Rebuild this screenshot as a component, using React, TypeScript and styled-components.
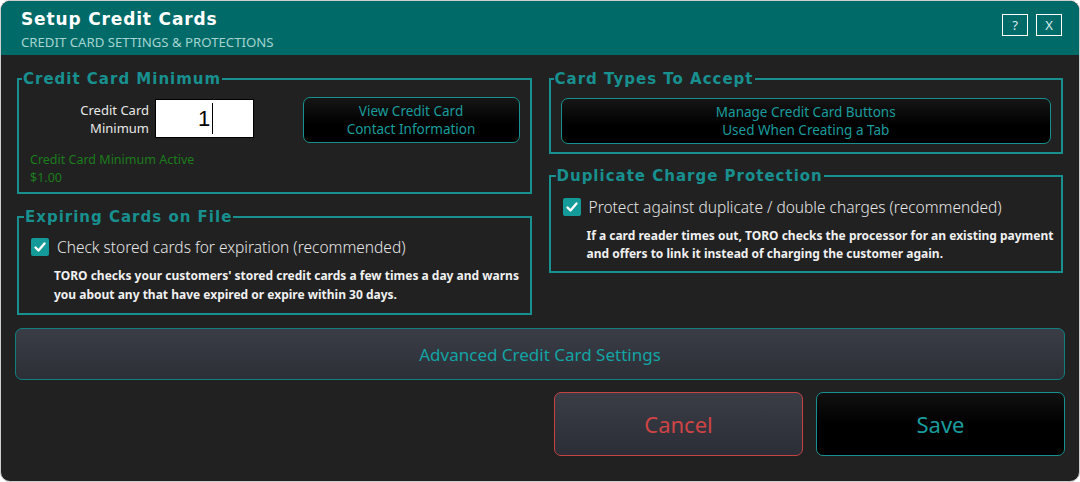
import React from "react";
import styled, { createGlobalStyle } from "styled-components";

const GlobalStyle = createGlobalStyle`
  html, body {
    margin: 0;
    padding: 0;
    background: #ffffff;
  }
  body {
    font-family: "Noto Sans", "Open Sans", sans-serif;
  }
`;

const teal = "#17908f";
const tealText = "#1a9c9c";

const Window = styled.div`
  width: 1080px;
  height: 482px;
  box-sizing: border-box;
  border: 1px solid #cfcfcf;
  border-radius: 10px;
  overflow: hidden;
  background: #212121;
  display: flex;
  flex-direction: column;
`;

const Header = styled.div`
  height: 54px;
  box-sizing: border-box;
  background: #006a68;
  display: flex;
  align-items: flex-start;
  justify-content: space-between;
  padding: 6px 17px 0 20px;
`;

const TitleBlock = styled.div`
  display: flex;
  flex-direction: column;
`;

const Title = styled.div`
  font-family: "DejaVu Sans", sans-serif;
  font-weight: bold;
  font-size: 17px;
  letter-spacing: 0.85px;
  line-height: 24px;
  color: #ffffff;
`;

const Subtitle = styled.div`
  font-size: 13.2px;
  line-height: 20px;
  color: #a3d4d0;
  margin-top: 1px;
`;

const HeaderButtons = styled.div`
  display: flex;
  gap: 8px;
  margin-top: 7px;
`;

const HeaderButton = styled.div`
  width: 26px;
  height: 22px;
  box-sizing: border-box;
  border: 1px solid #ffffff;
  color: #d9eeee;
  font-size: 13px;
  display: flex;
  align-items: center;
  justify-content: center;
`;

const Body = styled.div`
  flex: 1;
  padding: 0 14px;
  display: flex;
  flex-direction: column;
`;

const Columns = styled.div`
  display: grid;
  grid-template-columns: minmax(0, 1fr) minmax(0, 1fr);
  gap: 17px;
  padding: 15px 2px 0;
  align-items: start;
`;

const Column = styled.div<{ $gap: number }>`
  display: flex;
  flex-direction: column;
  gap: ${(p) => p.$gap}px;
  min-width: 0;
`;

const Group = styled.fieldset<{ $pad: string }>`
  margin: 0;
  border: 2px solid ${teal};
  padding: ${(p) => p.$pad};
  min-width: 0;
`;

const Legend = styled.legend`
  font-family: "DejaVu Sans", sans-serif;
  font-weight: bold;
  font-size: 15px;
  letter-spacing: 1px;
  line-height: 18px;
  color: ${teal};
  padding: 0 1px 0 1px;
  margin-left: -7px;
`;

const MinRow = styled.div`
  display: flex;
  align-items: center;
`;

const MinLabel = styled.div`
  width: 120px;
  text-align: right;
  font-size: 13px;
  line-height: 18px;
  color: #e8e8e8;
  margin-right: 6px;
`;

const InputBox = styled.div`
  width: 99px;
  height: 39px;
  box-sizing: border-box;
  background: #ffffff;
  border: 1px solid #000000;
  display: flex;
  align-items: center;
  justify-content: center;
  font-family: "Liberation Sans", sans-serif;
  font-size: 22px;
  color: #000000;
  padding-left: 2px;
`;

const Caret = styled.span`
  display: inline-block;
  width: 1px;
  height: 31px;
  background: #000000;
  margin-left: 2px;
`;

const DarkButton = styled.div<{ $w?: string; $h: number; $shift?: number }>`
  width: ${(p) => p.$w || "auto"};
  height: ${(p) => p.$h}px;
  margin-top: ${(p) => p.$shift || 0}px;
  box-sizing: border-box;
  border: 1px solid ${teal};
  border-radius: 7px;
  background: linear-gradient(#161616, #000000 60%);
  color: ${tealText};
  font-size: 13.5px;
  line-height: 18px;
  display: flex;
  flex-direction: column;
  align-items: center;
  justify-content: center;
  text-align: center;
`;

const Spacer = styled.div`
  flex: 1;
`;

const ActiveNote = styled.div`
  margin-top: 8px;
  padding-left: 1px;
  font-size: 12.5px;
  line-height: 18px;
  color: #1c7c1c;
`;

const CheckRow = styled.div`
  display: flex;
  align-items: center;
  gap: 8px;
`;

const Box = styled.div`
  width: 18px;
  height: 18px;
  border-radius: 2px;
  background: #139a99;
  display: flex;
  align-items: center;
  justify-content: center;
`;

const CheckLabel = styled.div`
  font-size: 15.5px;
  line-height: 20px;
  color: #e6e6e6;
  font-weight: 300;
`;

const Description = styled.div<{ $indent: number; $gapTop: number; $lh: number }>`
  margin: ${(p) => p.$gapTop}px 0 0 ${(p) => p.$indent}px;
  font-size: 12px;
  font-weight: bold;
  line-height: ${(p) => p.$lh}px;
  white-space: nowrap;
  color: #f0f0f0;
`;

const WideButton = styled.div`
  margin-top: 13px;
  height: 52px;
  box-sizing: border-box;
  border: 1px solid #107f80;
  border-radius: 7px;
  background: linear-gradient(#3a3d46, #2d2f37);
  color: #12a4a4;
  font-size: 17px;
  display: flex;
  align-items: center;
  justify-content: center;
`;

const Actions = styled.div`
  margin-top: 12px;
  display: flex;
  justify-content: flex-end;
  gap: 13px;
`;

const ActionButton = styled.div<{ $kind: "cancel" | "save" }>`
  width: 249px;
  height: 64px;
  box-sizing: border-box;
  border-radius: 7px;
  border: 1px solid ${(p) => (p.$kind === "cancel" ? "#c84242" : teal)};
  background: ${(p) =>
    p.$kind === "cancel"
      ? "linear-gradient(#3a3c46, #2c2e37)"
      : "linear-gradient(#111111, #000000 50%)"};
  color: ${(p) => (p.$kind === "cancel" ? "#cf4444" : tealText)};
  font-size: 22px;
  display: flex;
  align-items: center;
  justify-content: center;
`;

const Check = () => (
  <Box>
    <svg width="14" height="14" viewBox="0 0 14 14">
      <path
        d="M2.5 7.5 L5.5 10.5 L11.5 3.5"
        fill="none"
        stroke="#ffffff"
        strokeWidth="2.4"
        strokeLinecap="round"
        strokeLinejoin="round"
      />
    </svg>
  </Box>
);

const App = () => {
  return (
    <Window>
      <GlobalStyle />
      <Header>
        <TitleBlock>
          <Title>Setup Credit Cards</Title>
          <Subtitle>CREDIT CARD SETTINGS &amp; PROTECTIONS</Subtitle>
        </TitleBlock>
        <HeaderButtons>
          <HeaderButton>?</HeaderButton>
          <HeaderButton>X</HeaderButton>
        </HeaderButtons>
      </Header>
      <Body>
        <Columns>
          <Column $gap={14}>
            <Group $pad="6px 10px 5px 10px">
              <Legend>Credit Card Minimum</Legend>
              <MinRow>
                <MinLabel>
                  Credit Card
                  <br />
                  Minimum
                </MinLabel>
                <InputBox>
                  1<Caret />
                </InputBox>
                <Spacer />
                <DarkButton $w="217px" $h={46} $shift={3}>
                  <span>View Credit Card</span>
                  <span>Contact Information</span>
                </DarkButton>
              </MinRow>
              <ActiveNote>
                Credit Card Minimum Active
                <br />
                $1.00
              </ActiveNote>
            </Group>
            <Group $pad="11px 12px 9px 12px">
              <Legend>Expiring Cards on File</Legend>
              <CheckRow>
                <Check />
                <CheckLabel>Check stored cards for expiration (recommended)</CheckLabel>
              </CheckRow>
              <Description $indent={23} $gapTop={9} $lh={19}>
                TORO checks your customers' stored credit cards a few times a day and warns
                <br />
                you about any that have expired or expire within 30 days.
              </Description>
            </Group>
          </Column>
          <Column $gap={13}>
            <Group $pad="10px 10px 8px 10px">
              <Legend>Card Types To Accept</Legend>
              <DarkButton $h={46}>
                <span>Manage Credit Card Buttons</span>
                <span>Used When Creating a Tab</span>
              </DarkButton>
            </Group>
            <Group $pad="12px 12px 8px 12px">
              <Legend>Duplicate Charge Protection</Legend>
              <CheckRow>
                <Check />
                <CheckLabel>Protect against duplicate / double charges (recommended)</CheckLabel>
              </CheckRow>
              <Description $indent={24} $gapTop={10} $lh={18}>
                If a card reader times out, TORO checks the processor for an existing payment
                <br />
                and offers to link it instead of charging the customer again.
              </Description>
            </Group>
          </Column>
        </Columns>
        <WideButton>Advanced Credit Card Settings</WideButton>
        <Actions>
          <ActionButton $kind="cancel">Cancel</ActionButton>
          <ActionButton $kind="save">Save</ActionButton>
        </Actions>
      </Body>
    </Window>
  );
};

export default App;
